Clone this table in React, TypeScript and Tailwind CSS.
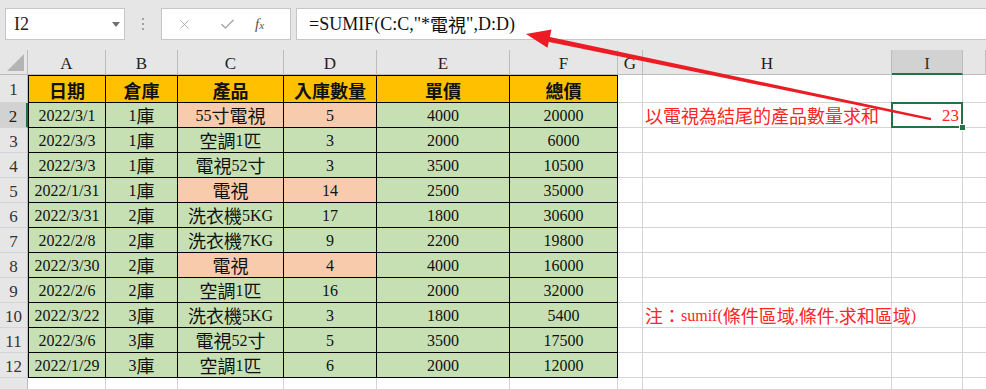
import { Check, X } from "lucide-react";

const COLS = ["A", "B", "C", "D", "E", "F", "G", "H", "I", ""];

const HEAD = ["日期", "倉庫", "產品", "入庫數量", "單價", "總價"];

const ROWS: [string, string, string, number, number, number, boolean][] = [
  ["2022/3/1", "1庫", "55寸電視", 5, 4000, 20000, true],
  ["2022/3/3", "1庫", "空調1匹", 3, 2000, 6000, false],
  ["2022/3/3", "1庫", "電視52寸", 3, 3500, 10500, false],
  ["2022/1/31", "1庫", "電視", 14, 2500, 35000, true],
  ["2022/3/31", "2庫", "洗衣機5KG", 17, 1800, 30600, false],
  ["2022/2/8", "2庫", "洗衣機7KG", 9, 2200, 19800, false],
  ["2022/3/30", "2庫", "電視", 4, 4000, 16000, true],
  ["2022/2/6", "2庫", "空調1匹", 16, 2000, 32000, false],
  ["2022/3/22", "3庫", "洗衣機5KG", 3, 1800, 5400, false],
  ["2022/3/6", "3庫", "電視52寸", 5, 3500, 17500, false],
  ["2022/1/29", "3庫", "空調1匹", 6, 2000, 12000, false],
];

// latin runs stay serif, CJK runs get the wider CJK face
function Mixed({ text }: { text: string }) {
  const parts = text.split(/([\u2E80-\u9FFF\uFF00-\uFFEF]+)/);
  return (
    <>
      {parts.map((p, i) =>
        i % 2 ? (
          <span key={i} className="[font-family:'Noto_Sans_CJK_TC',sans-serif] text-[18px]">
            {p}
          </span>
        ) : (
          <span key={i}>{p}</span>
        )
      )}
    </>
  );
}

function RowHead({ n, active }: { n: number; active?: boolean }) {
  return (
    <div
      className={`flex items-center justify-center pt-[2px] border-b border-[#d4d4d4] text-[17px] ${
        active
          ? "bg-[#d2d2d2] border-r-2 border-r-[#217346] text-[#1e1e1e]"
          : "bg-[#e6e6e6] border-r border-r-[#bcbcbc] text-[#333]"
      }`}
    >
      {n}
    </div>
  );
}

function Blank({ last }: { last?: boolean }) {
  return <div className={`border-b border-[#d4d4d4] ${last ? "" : "border-r"}`} />;
}

function TCell({ children, tone, left }: { children: React.ReactNode; tone: string; left?: boolean }) {
  return (
    <div
      className={`flex items-end justify-center pb-[3px] border-r border-b border-black text-[16px] text-[#111] ${tone} ${
        left ? "border-l" : ""
      }`}
    >
      {children}
    </div>
  );
}

export default function App() {
  return (
    <div className="relative w-[986px] h-[389px] overflow-hidden bg-white [font-family:'Liberation_Serif','Noto_Sans_CJK_TC',serif] leading-none">
      {/* --- toolbar / formula bar --- */}
      <div className="h-[50px] bg-[#e6e6e6] flex items-start pt-[8px] pl-[5px]">
        <div className="relative w-[120px] h-[32px] bg-white border border-[#c6c6c6] flex items-center pl-[8px] text-[18px] text-[#222]">
          I2
          <svg className="absolute left-[106px] top-[13px]" width="8" height="5" viewBox="0 0 8 5">
            <path d="M0 0 H8 L4 5 Z" fill="#6f6f6f" />
          </svg>
        </div>
        <div className="w-[36px] h-[32px] flex flex-col items-center justify-center gap-[3px]">
          <span className="w-[2px] h-[2px] bg-[#a0a0a0]" />
          <span className="w-[2px] h-[2px] bg-[#a0a0a0]" />
          <span className="w-[2px] h-[2px] bg-[#a0a0a0]" />
        </div>
        <div className="w-[130px] h-[32px] bg-white border border-[#c6c6c6] flex items-center text-[#a8a8a8]">
          <X size={15} strokeWidth={1.4} className="ml-[15px]" />
          <Check size={17} strokeWidth={2} className="ml-[27px]" />
          <span className="ml-[19px] italic text-[15px] text-[#555]">
            f<span className="text-[11px]">x</span>
          </span>
        </div>
        <div className="ml-[5px] flex-1 h-[32px] bg-white border border-[#c6c6c6] border-r-0 flex items-center pl-[12px] text-[18px] text-[#111]">
          <Mixed text={'=SUMIF(C:C,"*電視",D:D)'} />
        </div>
      </div>

      {/* --- sheet grid --- */}
      <div className="grid grid-cols-[28px_78px_72px_106px_93px_133px_108px_25px_249px_71px_1fr] grid-rows-[25px_28px_repeat(11,25px)_1fr] h-[339px]">
        {/* column header row */}
        <div className="relative bg-[#e6e6e6] border-r border-b border-[#bcbcbc]">
          <svg className="absolute right-[3px] bottom-[3px]" width="17" height="17" viewBox="0 0 17 17">
            <path d="M17 0 V17 H0 Z" fill="#b4b4b4" />
          </svg>
        </div>
        {COLS.map((c, i) =>
          c === "I" ? (
            <div
              key={i}
              className="flex items-center justify-center pt-[3px] bg-[#d2d2d2] border-r border-r-[#bcbcbc] border-b-2 border-b-[#217346] text-[17px] text-[#1e3a2a]"
            >
              {c}
            </div>
          ) : (
            <div
              key={i}
              className="flex items-center justify-center pt-[3px] bg-[#e6e6e6] border-r border-b border-[#bcbcbc] text-[17px] text-[#222]"
            >
              {c}
            </div>
          )
        )}

        {/* row 1: headers */}
        <RowHead n={1} />
        {HEAD.map((h, i) => (
          <div
            key={h}
            className={`flex items-end justify-center pb-[3px] bg-[#ffc000] border-t border-r border-b border-black font-bold text-[#111] ${
              i === 0 ? "border-l" : ""
            }`}
          >
            <Mixed text={h} />
          </div>
        ))}
        <Blank />
        <Blank />
        <Blank />
        <Blank last />

        {/* rows 2-12 */}
        {ROWS.map((r, ri) => {
          const n = ri + 2;
          const green = "bg-[#c6e0b4]";
          const hot = r[6] ? "bg-[#f8cbad]" : green;
          return [
            <RowHead key={`h${n}`} n={n} active={n === 2} />,
            <TCell key={`a${n}`} tone={green} left>
              {r[0]}
            </TCell>,
            <TCell key={`b${n}`} tone={green}>
              <Mixed text={r[1]} />
            </TCell>,
            <TCell key={`c${n}`} tone={hot}>
              <Mixed text={r[2]} />
            </TCell>,
            <TCell key={`d${n}`} tone={hot}>
              {r[3]}
            </TCell>,
            <TCell key={`e${n}`} tone={green}>
              {r[4]}
            </TCell>,
            <TCell key={`f${n}`} tone={green}>
              {r[5]}
            </TCell>,
            <Blank key={`g${n}`} />,
            n === 2 ? (
              <div key="h2" className="flex items-end pb-[3px] pl-[2px] border-r border-b border-[#d4d4d4] text-[16px] text-[#ff2525] whitespace-nowrap">
                <Mixed text="以電視為結尾的產品數量求和" />
              </div>
            ) : n === 10 ? (
              <div key="h10" className="flex items-end pb-[3px] pl-[2px] border-r border-b border-[#d4d4d4] text-[16px] text-[#ff2525] whitespace-nowrap overflow-visible">
                <Mixed text="注：sumif(條件區域,條件,求和區域)" />
              </div>
            ) : (
              <Blank key={`hh${n}`} />
            ),
            n === 2 ? (
              <div key="i2" className="relative flex items-end justify-end pb-[3px] pr-[3px] border-r border-b border-[#d4d4d4] text-[17px] text-[#ff2525]">
                23
                <div className="absolute -left-[1px] -top-[1px] -right-[1px] -bottom-[1px] border-2 border-[#217346]" />
                <div className="absolute -right-[4px] -bottom-[4px] w-[7px] h-[7px] bg-[#217346] border border-white" />
              </div>
            ) : (
              <Blank key={`i${n}`} />
            ),
            <Blank key={`j${n}`} last />,
          ];
        })}

        {/* row 13 stub */}
        <div className="bg-[#e6e6e6] border-r border-[#bcbcbc]" />
        <div className="border-r border-[#d4d4d4]" />
        <div className="border-r border-[#d4d4d4]" />
        <div className="border-r border-[#d4d4d4]" />
        <div className="border-r border-[#d4d4d4]" />
        <div className="border-r border-[#d4d4d4]" />
        <div className="border-r border-[#d4d4d4]" />
        <div className="border-r border-[#d4d4d4]" />
        <div className="border-r border-[#d4d4d4]" />
        <div className="border-r border-[#d4d4d4]" />
        <div />
      </div>

      {/* red annotation arrow */}
      <svg className="absolute left-0 top-0 pointer-events-none" width="986" height="389" viewBox="0 0 986 389">
        <polygon points="540.5,35 931.2,118 930.8,120.2 539.5,40" fill="#ed1c24" />
        <polygon points="526,34 551.5,29.5 547.5,47.8" fill="#ed1c24" />
      </svg>
    </div>
  );
}
